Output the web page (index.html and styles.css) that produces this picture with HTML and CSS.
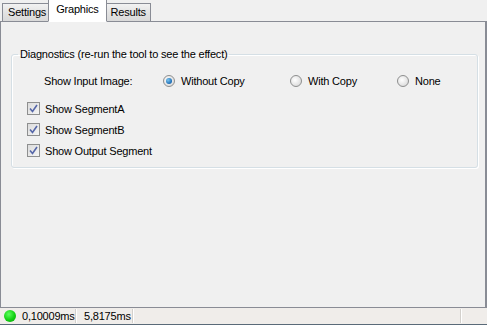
FILE: index.html
```html
<!DOCTYPE html>
<html>
<head>
<meta charset="utf-8">
<link rel="stylesheet" href="styles.css">
</head>
<body>
<div class="window">
  <div class="tabs">
    <div class="tab">Settings</div>
    <div class="tab active">Graphics</div>
    <div class="tab">Results</div>
  </div>
  <div class="panel">
    <fieldset class="group">
      <legend>Diagnostics (re-run the tool to see the effect)</legend>
      <div class="radio-row">
        <span class="label">Show Input Image:</span>
        <span class="radio r1 checked"><i class="dot"></i>Without Copy</span>
        <span class="radio r2"><i class="dot"></i>With Copy</span>
        <span class="radio r3"><i class="dot"></i>None</span>
      </div>
      <div class="checks">
        <div class="check"><i class="box"><svg viewBox="0 0 9 9" width="9" height="9"><path d="M1 4.5 L3.5 7.5 L8 1" fill="none" stroke="#5566a8" stroke-width="1.6"/></svg></i>Show SegmentA</div>
        <div class="check"><i class="box"><svg viewBox="0 0 9 9" width="9" height="9"><path d="M1 4.5 L3.5 7.5 L8 1" fill="none" stroke="#5566a8" stroke-width="1.6"/></svg></i>Show SegmentB</div>
        <div class="check"><i class="box"><svg viewBox="0 0 9 9" width="9" height="9"><path d="M1 4.5 L3.5 7.5 L8 1" fill="none" stroke="#5566a8" stroke-width="1.6"/></svg></i>Show Output Segment</div>
      </div>
    </fieldset>
  </div>
  <div class="status">
    <span class="cell first"><i class="led"></i>0,10009ms</span>
    <span class="cell second">5,8175ms</span>
    <span class="cell grow"></span>
    <span class="cell end"></span>
  </div>
</div>
</body>
</html>
```
FILE: styles.css
```css
html, body {
  margin: 0;
  padding: 0;
  background: #f0f0f0;
}
body {
  font-family: "Liberation Sans", Arial, sans-serif;
  font-size: 11px;
  letter-spacing: -0.2px;
  color: #000;
}
.window {
  width: 487px;
  height: 325px;
  display: flex;
  flex-direction: column;
  background: #f0f0f0;
}
.tabs {
  display: flex;
  align-items: flex-end;
  height: 21px;
  padding-left: 2px;
  position: relative;
  z-index: 1;
}
.tab {
  height: 17px;
  line-height: 17px;
  padding: 0 4px 0 5px;
  border: 1px solid #898c95;
  border-bottom: none;
  background: linear-gradient(#f2f2f2, #e3e3e3 50%, #d9d9d9);
  margin-right: -1px;
  box-sizing: content-box;
}
.tab.active {
  height: 20px;
  line-height: 18px;
  background: #fff;
  margin-left: -2px;
  margin-right: -2px;
  padding: 0 7px 1px;
  position: relative;
  z-index: 2;
  border-bottom: 1px solid #fff;
  margin-bottom: -1px;
}
.panel {
  height: 287px;
  border: 1px solid #898c95;
  border-right: 2px solid #898c95;
  background: #f0f0f0;
  padding: 26px 8px 0 10px;
  box-sizing: border-box;
  width: 487px;
}
.group {
  margin: 0;
  padding: 0 0 10px 0;
  border: 1px solid #d5dfe5;
  border-radius: 3px;
  box-shadow: inset 1px 1px 0 #fff, 1px 1px 0 #fff;
  height: 120px;
  box-sizing: border-box;
  min-width: 0;
  width: 467px;
}
.group legend {
  padding: 0 2px;
  margin-left: 6px;
  line-height: 13px;
}
.radio-row {
  display: flex;
  align-items: center;
  height: 14px;
  margin-top: 13px;
  padding-left: 32px;
}
.label {
  width: 119px;
}
.radio {
  display: flex;
  align-items: center;
}
.r1 { width: 127px; }
.r2 { width: 107px; }
.dot {
  flex-shrink: 0;
  width: 12px;
  height: 12px;
  border-radius: 50%;
  border: 1px solid #8e8f8f;
  background: radial-gradient(circle at 40% 40%, #fff, #e4e4e4 60%, #cfcfcf);
  margin-right: 6px;
  box-sizing: border-box;
  position: relative;
}
.radio.checked .dot::after {
  content: "";
  position: absolute;
  left: 2px;
  top: 2px;
  width: 6px;
  height: 6px;
  border-radius: 50%;
  background: radial-gradient(circle at 35% 35%, #7ac5f0, #1c6cb4 70%, #0d4a8a);
}
.checks {
  margin-top: 14px;
  padding-left: 15px;
  display: flex;
  flex-direction: column;
  gap: 8px;
}
.check {
  display: flex;
  align-items: center;
  height: 13px;
}
.box {
  flex-shrink: 0;
  width: 13px;
  height: 13px;
  border: 1px solid #8e8f8f;
  box-sizing: border-box;
  background: linear-gradient(135deg, #dcdcdc, #f4f4f4);
  display: flex;
  align-items: center;
  justify-content: center;
  margin-right: 5px;
}
.status {
  flex: 1;
  display: flex;
  align-items: center;
  background: #f0edea;
  border-bottom: 1px solid #5a6a78;
}
.cell {
  display: flex;
  align-items: center;
  height: 14px;
  padding: 0 4px;
  border-right: 1px solid #d3d0cc;
  box-shadow: 1px 0 0 #fff;
}
.cell.first { padding-left: 4px; width: 67px; }
.cell.second { padding-left: 8px; width: 44px; }
.cell.grow { flex: 1; }
.cell.end { border: none; box-shadow: none; width: 18px; }
.led {
  flex-shrink: 0;
  width: 12px;
  height: 12px;
  border-radius: 50%;
  background: radial-gradient(circle at 40% 35%, #5dff5d, #12d012 55%, #0a9a0a);
  margin-right: 6px;
}
```
